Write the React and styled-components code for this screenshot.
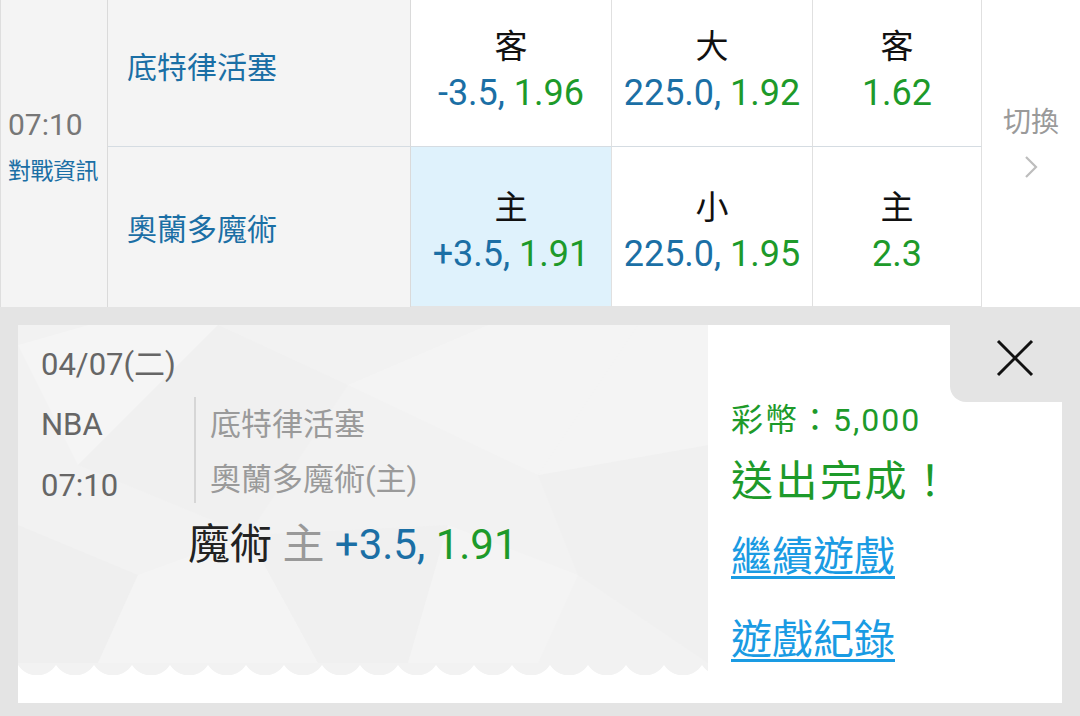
import React from "react";
import styled, { createGlobalStyle } from "styled-components";

const Global = createGlobalStyle`
  html, body { margin: 0; padding: 0; background: #e4e4e4; }
  body { font-family: Roboto, "Noto Sans CJK TC", sans-serif; }
  * { box-sizing: border-box; }
`;

const BLUE = "#1b6fa5";
const GREEN = "#1d9a2a";
const TICKET = "#f2f2f2";

const Page = styled.div`
  width: 1080px;
  height: 716px;
  overflow: hidden;
  background: #e4e4e4;
`;

const Board = styled.div`
  display: grid;
  grid-template-columns: 108px 303px 201px 201px 169px 1fr;
  grid-template-rows: 147px 160px;
  background: #fff;
`;

const TimeCell = styled.div`
  grid-row: 1 / span 2;
  grid-column: 1;
  background: #f4f4f4;
  border-left: 1px solid #dedede;
  border-right: 1px solid #dadada;
  display: flex;
  flex-direction: column;
  justify-content: center;
  padding: 0 0 16px 7px;
`;

const TimeText = styled.div`
  font-size: 30px;
  line-height: 40px;
  color: #777;
`;

const InfoLink = styled.div`
  font-size: 23px;
  line-height: 30px;
  color: ${BLUE};
  margin-top: 12px;
  letter-spacing: -0.5px;
`;

const TeamCell = styled.div`
  background: #f4f4f4;
  border-right: 1px solid #dadada;
  border-bottom: ${(p) => (p.$top ? "1px solid #d5dce2" : "none")};
  display: flex;
  align-items: center;
  padding: ${(p) => (p.$top ? "0 0 16px 19px" : "0 0 0 19px")};
  font-size: 30px;
  color: ${BLUE};
`;

const OddsCell = styled.div`
  background: ${(p) => (p.$active ? "#dff2fc" : "#fff")};
  border-right: 1px solid #e0e0e0;
  border-bottom: ${(p) => (p.$top ? "1px solid #d5dce2" : "1px solid #e4e4e4")};
  display: flex;
  flex-direction: column;
  align-items: center;
  justify-content: center;
  padding: ${(p) => (p.$top ? "0 0 6px" : "8px 0 0")};
`;

const OddsLabel = styled.div`
  font-size: 33px;
  line-height: 46px;
  color: #111;
`;

const OddsValue = styled.div`
  font-size: 36px;
  line-height: 46px;
  white-space: nowrap;
`;

const Blue = styled.span`
  color: ${BLUE};
`;
const Green = styled.span`
  color: ${GREEN};
`;
const Muted = styled.span`
  color: #999;
`;

const SwitchCell = styled.div`
  grid-row: 1 / span 2;
  grid-column: 6;
  background: #fff;
  display: flex;
  flex-direction: column;
  align-items: center;
  justify-content: center;
  padding-bottom: 26px;
`;

const SwitchText = styled.div`
  font-size: 28px;
  line-height: 40px;
  color: #9a9a9a;
`;

const Chevron = styled.svg`
  margin-top: 12px;
`;

const Card = styled.div`
  position: relative;
  margin: 18px 18px 0 18px;
  height: 378px;
  background: #fff;
  display: flex;
`;

const Ticket = styled.div`
  width: 690px;
  display: flex;
  flex-direction: column;
  padding-bottom: 28px;
`;

const TicketBody = styled.div`
  position: relative;
  flex: 1;
  background: ${TICKET};
  overflow: hidden;
  padding: 20px 0 0 23px;
`;

const Decor = styled.svg`
  position: absolute;
  inset: 0;
  pointer-events: none;
`;

const Layer = styled.div`
  position: relative;
`;

const Scallop = styled.div`
  height: 12px;
  background: radial-gradient(circle at 50% -10px, ${TICKET} 22px, transparent 22.8px) 0 0 / 38px 12px repeat-x;
`;

const DateLine = styled.div`
  font-size: 31px;
  line-height: 40px;
  color: #666;
`;

const InfoRow = styled.div`
  display: flex;
  align-items: flex-start;
  margin-top: 9px;
`;

const MetaCol = styled.div`
  width: 153px;
  font-size: 31px;
  line-height: 61px;
  color: #666;
`;

const Divider = styled.div`
  width: 2px;
  height: 106px;
  margin-top: 3px;
  background: #d6d6d6;
`;

const TeamsCol = styled.div`
  padding: 3px 0 0 14px;
  font-size: 31px;
  line-height: 55px;
  color: #9a9a9a;
`;

const BetLine = styled.div`
  margin: 4px 0 0 147px;
  font-size: 42px;
  line-height: 50px;
  color: #222;
  white-space: nowrap;
`;

const Result = styled.div`
  flex: 1;
  padding: 73px 0 0 23px;
`;

const Coins = styled.div`
  font-size: 32px;
  line-height: 44px;
  letter-spacing: 2px;
  color: ${GREEN};
`;

const Done = styled.div`
  margin-top: 10px;
  font-size: 42px;
  line-height: 60px;
  letter-spacing: 2.5px;
  color: ${GREEN};
`;

const ActionLink = styled.a`
  display: block;
  width: max-content;
  margin-top: ${(p) => p.$gap}px;
  font-size: 41px;
  line-height: 56px;
  color: #1a9be3;
  text-decoration: underline;
  text-decoration-thickness: 3px;
  text-underline-offset: 5px;
  cursor: pointer;
`;

const CloseTab = styled.button`
  position: absolute;
  top: 0;
  right: 0;
  width: 112px;
  height: 77px;
  border: none;
  padding: 0 0 11px 18px;
  background: #e4e4e4;
  border-bottom-left-radius: 16px;
  display: flex;
  align-items: center;
  justify-content: center;
  cursor: pointer;
`;

export default function App() {
  return (
    <Page>
      <Global />
      <Board>
        <TimeCell>
          <TimeText>07:10</TimeText>
          <InfoLink>對戰資訊</InfoLink>
        </TimeCell>

        <TeamCell $top>底特律活塞</TeamCell>
        <OddsCell $top>
          <OddsLabel>客</OddsLabel>
          <OddsValue>
            <Blue>-3.5, </Blue>
            <Green>1.96</Green>
          </OddsValue>
        </OddsCell>
        <OddsCell $top>
          <OddsLabel>大</OddsLabel>
          <OddsValue>
            <Blue>225.0, </Blue>
            <Green>1.92</Green>
          </OddsValue>
        </OddsCell>
        <OddsCell $top>
          <OddsLabel>客</OddsLabel>
          <OddsValue>
            <Green>1.62</Green>
          </OddsValue>
        </OddsCell>

        <SwitchCell>
          <SwitchText>切換</SwitchText>
          <Chevron width="14" height="24" viewBox="0 0 14 24">
            <polyline points="2,2 12,12 2,22" fill="none" stroke="#bdbdbd" strokeWidth="2.2" />
          </Chevron>
        </SwitchCell>

        <TeamCell>奧蘭多魔術</TeamCell>
        <OddsCell $active>
          <OddsLabel>主</OddsLabel>
          <OddsValue>
            <Blue>+3.5, </Blue>
            <Green>1.91</Green>
          </OddsValue>
        </OddsCell>
        <OddsCell>
          <OddsLabel>小</OddsLabel>
          <OddsValue>
            <Blue>225.0, </Blue>
            <Green>1.95</Green>
          </OddsValue>
        </OddsCell>
        <OddsCell>
          <OddsLabel>主</OddsLabel>
          <OddsValue>
            <Green>2.3</Green>
          </OddsValue>
        </OddsCell>
      </Board>

      <Card>
        <Ticket>
          <TicketBody>
            <Decor width="690" height="338" viewBox="0 0 690 338">
              <polygon points="0,20 70,0 200,0 60,140" fill="#f5f5f5" />
              <polygon points="60,140 200,0 330,60 230,210" fill="#f0f0f0" />
              <polygon points="330,60 470,0 620,0 520,150" fill="#f4f4f4" />
              <polygon points="0,200 120,250 80,338 0,338" fill="#efefef" />
              <polygon points="120,250 230,210 300,338 80,338" fill="#f4f4f4" />
              <polygon points="230,210 430,200 390,338 300,338" fill="#f0f0f0" />
              <polygon points="430,200 560,250 520,338 390,338" fill="#f4f4f4" />
              <polygon points="520,150 690,120 690,338 560,250" fill="#f0f0f0" />
              <polygon points="620,0 690,0 690,120 520,150" fill="#f4f4f4" />
            </Decor>
            <Layer>
              <DateLine>04/07(二)</DateLine>
              <InfoRow>
                <MetaCol>
                  <div>NBA</div>
                  <div>07:10</div>
                </MetaCol>
                <Divider />
                <TeamsCol>
                  <div>底特律活塞</div>
                  <div>奧蘭多魔術(主)</div>
                </TeamsCol>
              </InfoRow>
              <BetLine>
                魔術 <Muted>主</Muted> <Blue>+3.5, </Blue>
                <Green>1.91</Green>
              </BetLine>
            </Layer>
          </TicketBody>
          <Scallop />
        </Ticket>

        <Result>
          <Coins>彩幣：5,000</Coins>
          <Done>送出完成！</Done>
          <ActionLink $gap={17}>繼續遊戲</ActionLink>
          <ActionLink $gap={27}>遊戲紀錄</ActionLink>
        </Result>

        <CloseTab aria-label="close">
          <svg width="38" height="38" viewBox="0 0 38 38">
            <line x1="2" y1="2" x2="36" y2="36" stroke="#111" strokeWidth="3" />
            <line x1="36" y1="2" x2="2" y2="36" stroke="#111" strokeWidth="3" />
          </svg>
        </CloseTab>
      </Card>
    </Page>
  );
}
